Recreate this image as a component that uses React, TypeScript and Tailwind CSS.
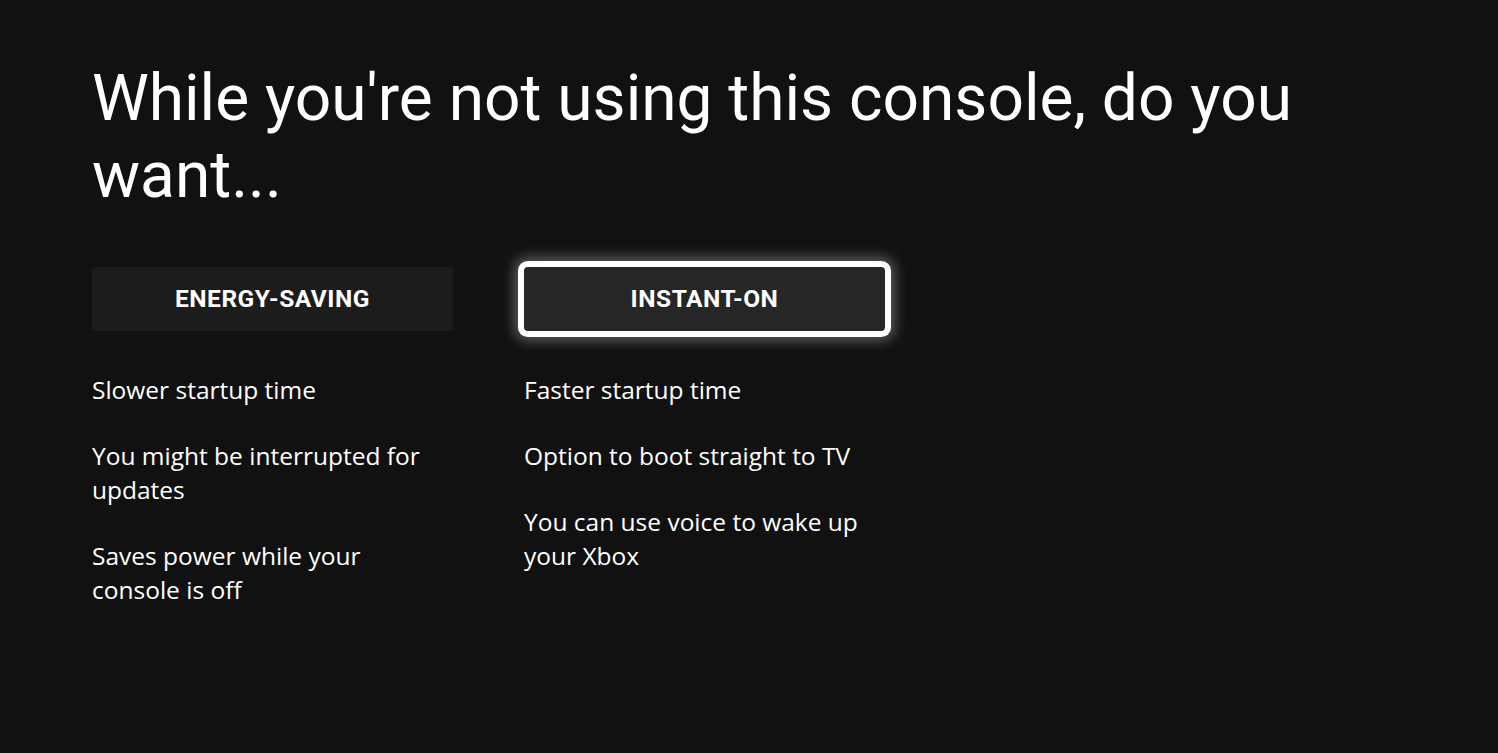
const energySaving = [
  "Slower startup time",
  "You might be interrupted for updates",
  "Saves power while your console is off",
];

const instantOn = [
  "Faster startup time",
  "Option to boot straight to TV",
  "You can use voice to wake up your Xbox",
];

function Column({ label, items, focused }: { label: string; items: string[]; focused?: boolean }) {
  return (
    <div className="w-[361px] flex flex-col">
      <button
        className={
          focused
            ? "h-[64px] w-full rounded-[4px] bg-[#262626] text-white font-bold text-[24.5px] tracking-[0.5px] shadow-[0_0_0_6px_#ffffff,0_0_14px_9px_rgba(255,255,255,0.35)]"
            : "h-[64px] w-full rounded-[2px] bg-[#1c1c1c] text-white font-bold text-[24.5px] tracking-[0.5px]"
        }
        style={{ fontFamily: "Roboto, sans-serif" }}
      >
        {label}
      </button>
      <ul className="mt-[42px] w-[350px] flex flex-col gap-[32px]">
        {items.map((t) => (
          <li
            key={t}
            className="text-[24.5px] leading-[34px] text-white"
            style={{ fontFamily: "'Open Sans', sans-serif" }}
          >
            {t}
          </li>
        ))}
      </ul>
    </div>
  );
}

export default function App() {
  return (
    <div className="min-h-screen w-full bg-[#111111] text-white">
      <div className="pl-[92px] pt-[60px]">
        <h1
          className="text-[64px] leading-[77px] font-normal text-white max-w-[1280px]"
          style={{ fontFamily: "Roboto, sans-serif" }}
        >
          While you're not using this console, do you want...
        </h1>
        <div className="mt-[53px] flex gap-[71px]">
          <Column label="ENERGY-SAVING" items={energySaving} />
          <Column label="INSTANT-ON" items={instantOn} focused />
        </div>
      </div>
    </div>
  );
}
